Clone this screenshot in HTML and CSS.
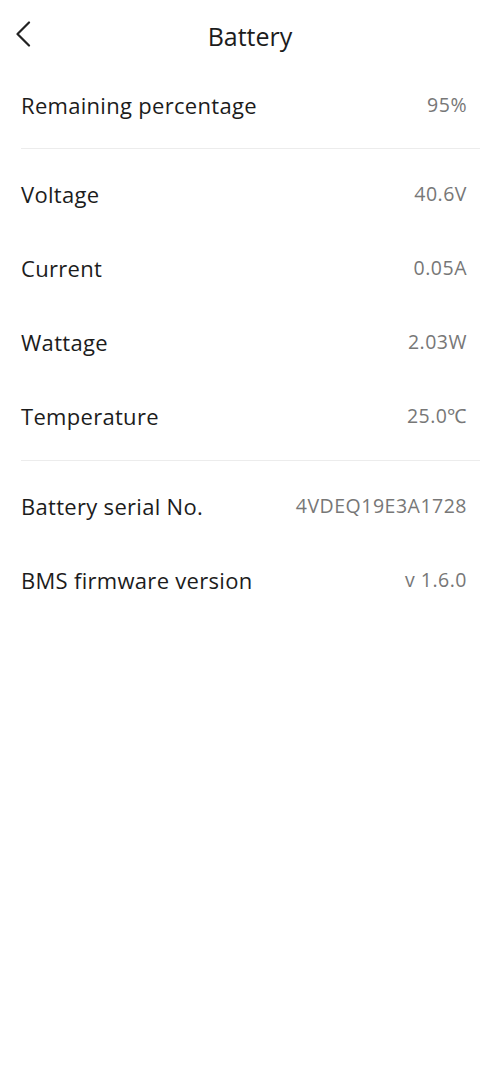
FILE: index.html
```html
<!DOCTYPE html>
<html lang="en">
<head>
<meta charset="utf-8">
<title>Battery</title>
<link rel="stylesheet" href="styles.css">
</head>
<body>
<div class="page">
  <header class="topbar">
    <button class="back" aria-label="Back">
      <svg width="16" height="26" viewBox="0 0 16 26" fill="none"><path d="M14 1.5 L2.5 13 L14 24.5" stroke="#222" stroke-width="2.2" stroke-linecap="round" stroke-linejoin="round"/></svg>
    </button>
    <h1 class="title">Battery</h1>
  </header>
  <section class="group first">
    <div class="row"><span class="label">Remaining percentage</span><span class="value">95%</span></div>
  </section>
  <section class="group">
    <div class="row"><span class="label">Voltage</span><span class="value">40.6V</span></div>
    <div class="row"><span class="label">Current</span><span class="value">0.05A</span></div>
    <div class="row"><span class="label">Wattage</span><span class="value">2.03W</span></div>
    <div class="row"><span class="label">Temperature</span><span class="value">25.0℃</span></div>
  </section>
  <section class="group last">
    <div class="row"><span class="label">Battery serial No.</span><span class="value">4VDEQ19E3A1728</span></div>
    <div class="row"><span class="label">BMS firmware version</span><span class="value">v 1.6.0</span></div>
  </section>
</div>
</body>
</html>
```
FILE: styles.css
```css
* { box-sizing: border-box; }
html, body { margin: 0; padding: 0; background: #fff; }
body {
  font-family: "Open Sans", Roboto, "Liberation Sans", sans-serif;
  color: #1c1c1c;
  width: 500px;
  height: 1082px;
}
.topbar {
  position: relative;
  height: 68px;
  display: flex;
  align-items: flex-start;
  justify-content: center;
}
.back {
  position: absolute;
  left: 15px;
  top: 21px;
  padding: 0;
  border: 0;
  background: none;
  line-height: 0;
}
.title {
  margin: 0;
  padding-top: 20px;
  font-size: 25px;
  font-weight: 400;
  line-height: 32px;
  color: #1c1c1c;
}
.group {
  margin: 0 20px 0 21px;
  padding: 8px 0 7px;
  border-bottom: 1px solid #ececec;
}
.group.first { padding-top: 0; padding-bottom: 6px; }
.group.last { border-bottom: 0; }
.row {
  height: 74px;
  display: flex;
  align-items: center;
  justify-content: space-between;
  padding-right: 13px;
  padding-bottom: 1px;
}
.label {
  font-size: 22px;
  letter-spacing: 0.3px;
  color: #1c1c1c;
}
.value {
  font-size: 19.5px;
  letter-spacing: 0.5px;
  color: #777;
}
```
